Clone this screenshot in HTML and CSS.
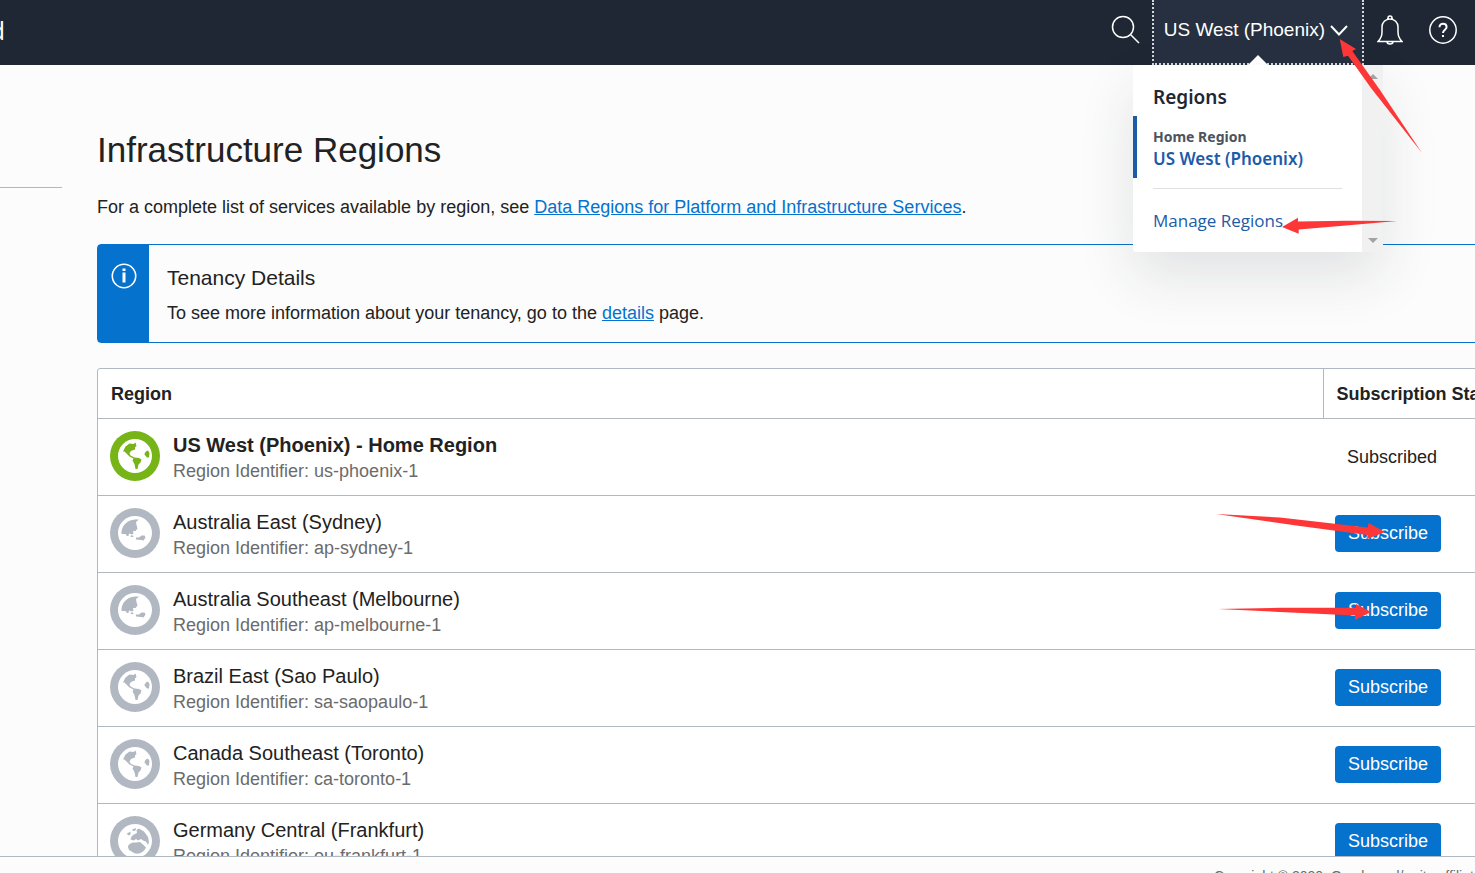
FILE: index.html
```html
<!DOCTYPE html>
<html lang="en">
<head>
<meta charset="utf-8">
<title>Infrastructure Regions</title>
<link rel="stylesheet" href="styles.css">
</head>
<body>
<svg class="sprite" aria-hidden="true">
  <symbol id="globe-americas" viewBox="0 0 50 50">
    <circle cx="25" cy="25" r="25" fill="currentColor"/>
    <circle cx="25" cy="25" r="17" fill="#fff"/>
    <path fill="currentColor" d="M13 20.500 15.500 15.500 19.500 12.500 23.500 13 25.500 11.500 26.500 15 25 16.500 25 18.500 22 19.500 20.500 20.500 19.500 22.500 20.500 24.500 24.500 26.500 29 27 31.500 28.500 30.500 31.500 28.500 33.500 27.500 38 25.500 38 24.500 33 22.500 29.500 23.500 27.500 19.500 25.500 16 22 14.500 20.500zM38 19.500C36 20 34.500 21.500 34.500 23.500L37 26.500 39 26.500 39.500 22z"/>
  </symbol>
  <symbol id="globe-asia" viewBox="0 0 50 50">
    <circle cx="25" cy="25" r="25" fill="currentColor"/>
    <circle cx="25" cy="25" r="17" fill="#fff"/>
    <path fill="currentColor" d="M11.500 26C11 18 17 12 25 11.500L29 11.500 26 14 26.500 17 27.500 20.500 25.500 23 23 23 23.500 25.500 22 26.500 19 25.500 18.500 28 17 28 15.500 26zM26 29.500 29 29.500 31.500 27.500 34.500 27.500 35.500 29.500 33.500 32.500 31 32 26 31.500zM20.500 27.500 23 27.500 23.500 29 21 29z"/>
  </symbol>
  <symbol id="globe-europe" viewBox="0 0 50 50">
    <circle cx="25" cy="25" r="25" fill="currentColor"/>
    <circle cx="25" cy="25" r="17" fill="#fff"/>
    <path fill="currentColor" d="M17 17.500 20.500 15.500 20.500 18.500 18 19.500zM22 13.500 26 12 25.500 14.500 23 15zM20.500 23.500 21.500 20.500 24 18.500 27 17 26.500 14 29 12.500 34 15.500 38 21 39 26 38 29 36 25.500 34 25 31 23 28 24.500 26 23 24 24.500zM18 31C18 28 22 26 26 26.500L30 26 33 28.500 36 31.500C34 36 29 39 24 37L19 34z"/>
  </symbol>
</svg>

<header class="topbar">
  <div class="brand"><span>Oracle Cloud</span></div>
  <nav class="tools" aria-label="Console tools">
    <button class="tool search" type="button" aria-label="Search">
      <svg width="30" height="30" viewBox="0 0 30 30"><circle cx="12" cy="12" r="10.500"/><path d="M19.500 19.500 28 28"/></svg>
    </button>
    <div class="region-menu">
      <button class="region-toggle" type="button" aria-expanded="true">
        <span>US West (Phoenix)</span>
        <svg width="18" height="12" viewBox="0 0 18 12"><path d="M1 2 9 10.500 17 2"/></svg>
      </button>
      <div class="popover">
        <div class="popover-body">
          <h2>Regions</h2>
          <div class="current">
            <span class="current-label">Home Region</span>
            <span class="current-name">US West (Phoenix)</span>
          </div>
          <a class="manage" href="#">Manage Regions</a>
        </div>
        <div class="scroll-track">
          <svg width="10" height="5" viewBox="0 0 10 5"><path d="M0 5 5 0 10 5z"/></svg>
          <svg width="10" height="5" viewBox="0 0 10 5"><path d="M0 0 5 5 10 0z"/></svg>
        </div>
      </div>
    </div>
    <button class="tool bell" type="button" aria-label="Announcements">
      <svg width="26" height="30" viewBox="0 0 26 30"><path d="M1 26.500C4 23.500 5 21 5 17V12C5 7.500 8.500 4 13 4S21 7.500 21 12V17C21 21 22 23.500 25 26.500zM11 4V3A2 2 0 0 1 15 3V4M10 26.500A3 2.500 0 0 0 16 26.500"/></svg>
    </button>
    <button class="tool help" type="button" aria-label="Help">
      <svg width="30" height="30" viewBox="0 0 30 30"><circle cx="15" cy="15" r="13.200"/><path class="bold" d="M11.500 12.200C11.500 7.500 18.600 7.800 18.600 12 18.600 14.800 15 14.600 15 18M15 20V22"/></svg>
    </button>
  </nav>
</header>

<div class="shell">
  <aside class="side"></aside>
  <main class="main">
    <h1>Infrastructure Regions</h1>
    <p class="intro">For a complete list of services available by region, see <a href="#">Data Regions for Platform and Infrastructure Services</a>.</p>
    <section class="notice">
      <div class="notice-icon">
        <svg width="26" height="26" viewBox="0 0 26 26"><circle cx="13" cy="13" r="11.700" fill="none" stroke="#fff" stroke-width="1.600"/><path fill="#fff" d="M11.500 5.500H14.500V8H11.500zM11.500 9.500H14.500V19.500H11.500z"/></svg>
      </div>
      <div class="notice-text">
        <h2>Tenancy Details</h2>
        <p>To see more information about your tenancy, go to the <a href="#">details</a> page.</p>
      </div>
    </section>
    <div class="table-frame">
    <table class="regions">
      <thead>
        <tr><th scope="col">Region</th><th scope="col" class="status">Subscription Status</th></tr>
      </thead>
      <tbody>
        <tr>
          <td><div class="region home"><svg><use href="#globe-americas"/></svg><div><strong class="name">US West (Phoenix) - Home Region</strong><span class="ident">Region Identifier: us-phoenix-1</span></div></div></td>
          <td><span class="subscribed">Subscribed</span></td>
        </tr>
        <tr>
          <td><div class="region"><svg><use href="#globe-asia"/></svg><div><span class="name">Australia East (Sydney)</span><span class="ident">Region Identifier: ap-sydney-1</span></div></div></td>
          <td><button class="subscribe" type="button">Subscribe</button></td>
        </tr>
        <tr>
          <td><div class="region"><svg><use href="#globe-asia"/></svg><div><span class="name">Australia Southeast (Melbourne)</span><span class="ident">Region Identifier: ap-melbourne-1</span></div></div></td>
          <td><button class="subscribe" type="button">Subscribe</button></td>
        </tr>
        <tr>
          <td><div class="region"><svg><use href="#globe-americas"/></svg><div><span class="name">Brazil East (Sao Paulo)</span><span class="ident">Region Identifier: sa-saopaulo-1</span></div></div></td>
          <td><button class="subscribe" type="button">Subscribe</button></td>
        </tr>
        <tr>
          <td><div class="region"><svg><use href="#globe-americas"/></svg><div><span class="name">Canada Southeast (Toronto)</span><span class="ident">Region Identifier: ca-toronto-1</span></div></div></td>
          <td><button class="subscribe" type="button">Subscribe</button></td>
        </tr>
        <tr>
          <td><div class="region"><svg><use href="#globe-europe"/></svg><div><span class="name">Germany Central (Frankfurt)</span><span class="ident">Region Identifier: eu-frankfurt-1</span></div></div></td>
          <td><button class="subscribe" type="button">Subscribe</button></td>
        </tr>
      </tbody>
    </table>
    </div>
  </main>
</div>
<footer class="footer"><span>Copyright © 2020, Oracle and/or its affiliates. All rights reserved.</span></footer>

<svg class="annotations" aria-hidden="true" width="210" height="600" viewBox="1215 30 210 600">
  <path d="M1339.700 39 1356 49 1352.300 51 1380 90 1422 153 1371 88 1348 55.700 1343.300 57zM1282 227 1298 217.700V221.500L1346 220.700 1397 221 1346 225.500 1298.700 229.500V233.700zM1216 514 1280 517.500 1367.700 527.500 1368.500 523 1385 532 1367 539 1367.500 535 1300 526zM1218 609 1280 607.800H1356V604L1371 612 1355 620V615.500L1280 612z"/>
</svg>
</body>
</html>
```
FILE: styles.css
```css
* {
  box-sizing: border-box;
}

body {
  display: flex;
  flex-direction: column;
  height: 100vh;
  margin: 0;
  overflow: hidden;
  background: #fcfcfc;
  color: #222;
  font: 18px/24px "Liberation Sans", Arial, sans-serif;
}

h1, h2, p {
  margin: 0;
  font-weight: 400;
}

a {
  color: #0572ce;
}

button {
  border: 0;
  padding: 0;
  background: none;
  color: #fff;
  font: inherit;
}

.sprite {
  display: none;
}

.topbar {
  display: flex;
  flex: none;
  justify-content: space-between;
  height: 65px;
  background: #1e2733;
}

.brand {
  display: flex;
  justify-content: flex-end;
  align-items: center;
  width: 5px;
  padding-bottom: 6px;
  overflow: hidden;
  color: #fff;
  font-family: "Open Sans", sans-serif;
  font-size: 25px;
  white-space: nowrap;
}

.tools {
  display: flex;
}

.tool {
  display: flex;
  align-items: flex-start;
  justify-content: center;
  padding-top: 15px;
}

.tool svg,
.region-toggle svg {
  fill: none;
  stroke: #fff;
  stroke-width: 1.500;
}

.tool svg .bold,
.region-toggle svg {
  stroke-width: 2;
}

.search {
  width: 52px;
}

.bell {
  width: 52px;
}

.help {
  width: 54px;
  margin-right: 5px;
}

.region-menu {
  position: relative;
  z-index: 2;
}

.region-toggle {
  display: flex;
  gap: 5px;
  align-items: center;
  height: 65px;
  padding: 0 14px 4px 10px;
  border: 2px dotted #d4d7db;
  border-top: 0;
  background: #263040;
  font-size: 19px;
  white-space: nowrap;
}

.popover {
  position: absolute;
  top: 65px;
  right: -19px;
  display: flex;
  width: 250px;
  border-radius: 4px;
  background: #fff;
  box-shadow: 0 24px 56px rgba(30, 39, 51, 0.12);
  font-family: "Noto Sans", "Open Sans", sans-serif;
}

.popover::before {
  content: "";
  position: absolute;
  top: -10px;
  left: 115px;
  border: 10px solid transparent;
  border-top: 0;
  border-bottom-color: #fcfcfc;
}

.popover-body {
  flex: 1;
  padding: 20px 20px 19px 0;
}

.popover h2 {
  padding-left: 20px;
  color: #1e2733;
  font-size: 19px;
  font-weight: 600;
}

.current {
  display: flex;
  flex-direction: column;
  margin: 7px 0 10px;
  padding: 11px 0 7px 16px;
  border-left: 4px solid #1c5ba8;
}

.current-label {
  color: #4c535d;
  font-size: 14px;
  font-weight: 700;
  line-height: 20px;
}

.current-name {
  color: #1c5ba8;
  font-size: 17px;
  font-weight: 600;
  white-space: nowrap;
}

.manage {
  display: block;
  margin-left: 20px;
  padding-top: 20px;
  border-top: 1px solid #dfe0e2;
  color: #1c5ba8;
  font-family: "Open Sans", "Noto Sans", sans-serif;
  font-size: 17px;
  text-decoration: none;
}

.scroll-track {
  display: flex;
  flex-direction: column;
  justify-content: space-between;
  align-items: center;
  width: 21px;
  padding: 9px 0;
  background: #f1f1f1;
  fill: #a3a3a3;
}

.shell {
  display: flex;
  flex: 1;
  gap: 35px;
  min-height: 0;
  overflow: hidden;
}

.side {
  flex: none;
  width: 62px;
  height: 123px;
  border-bottom: 1px solid #b2b8c2;
}

.main {
  flex: 1;
  min-width: 0;
  padding-top: 61px;
}

h1 {
  font-size: 35px;
  line-height: 48px;
}

.intro {
  margin-top: 21px;
}

.notice {
  display: flex;
  margin: 25px -47px 0 0;
  border: 1px solid #0572ce;
  border-radius: 4px;
}

.notice-icon {
  width: 51px;
  padding: 18px 0 0 13px;
  background: #0572ce;
}

.notice-text {
  padding: 21px 18px 17px;
}

.notice h2 {
  margin-bottom: 11px;
  font-size: 21px;
}

.table-frame {
  margin: 25px -47px 0 0;
  border: 1px solid #b2b8c2;
  border-radius: 3px;
  background: #fff;
}

.regions {
  width: 100%;
  border-collapse: collapse;
}

.regions th {
  height: 49px;
  padding: 2px 13px 0;
  text-align: left;
}

.regions .status {
  width: 198px;
  border-left: 1px solid #b2b8c2;
  white-space: nowrap;
}

.regions td {
  height: 77px;
  padding: 0 12px;
  border-top: 1px solid #b2b8c2;
}

.region {
  display: flex;
  gap: 13px;
  color: #b2b8c2;
}

.region svg {
  flex: none;
  width: 50px;
  height: 50px;
}

.home {
  color: #76b417;
}

.name,
.ident {
  display: block;
}

.name {
  color: #222;
  font-size: 20px;
  line-height: 28px;
}

.ident {
  color: #6b6b6b;
}

.subscribed {
  padding-left: 12px;
}

.subscribe {
  padding: 6px 13px 7px;
  border-radius: 4px;
  background: #0572ce;
}

.footer {
  flex: none;
  height: 17px;
  padding: 11px 0 0 1214px;
  border-top: 1px solid #b2b8c2;
  overflow: hidden;
  color: #6b6b6b;
  font-size: 14px;
  line-height: 16px;
  white-space: nowrap;
}

.annotations {
  position: absolute;
  top: 30px;
  right: 50px;
  z-index: 3;
  fill: #fd3737;
  pointer-events: none;
}
```
